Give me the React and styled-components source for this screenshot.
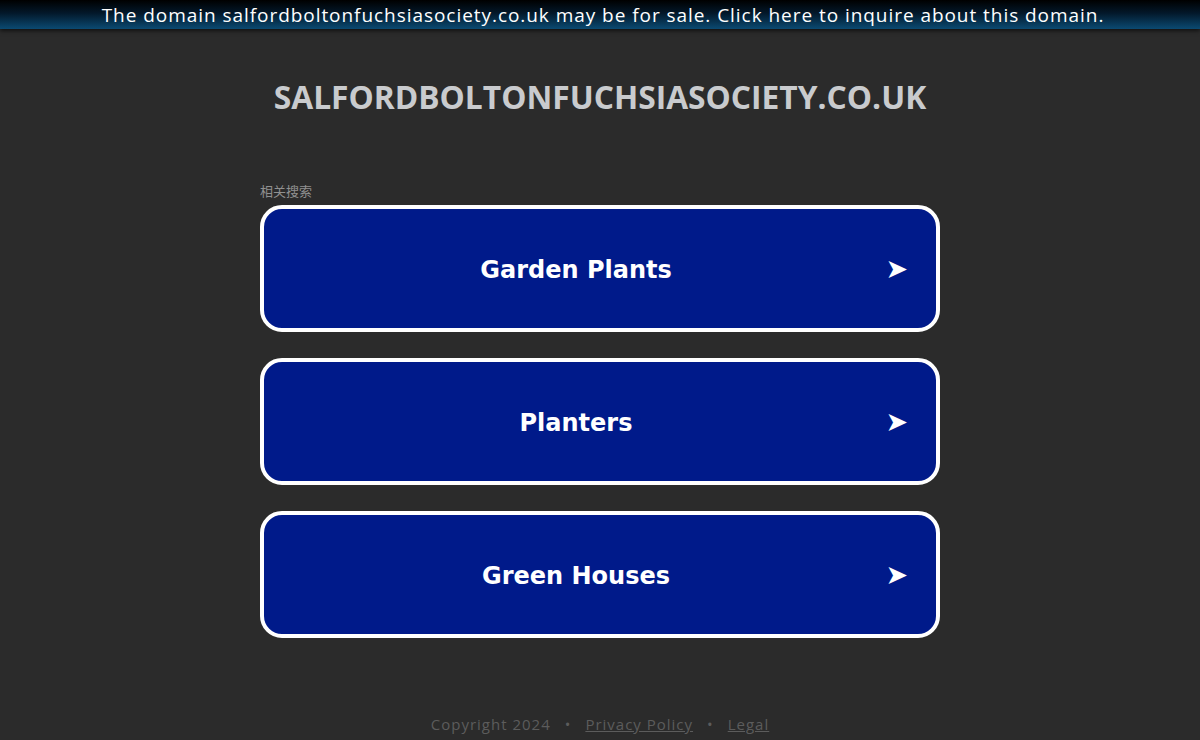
import React from 'react'
import styled, { createGlobalStyle } from 'styled-components'

const links = ['Garden Plants', 'Planters', 'Green Houses']

function App() {
  return (
    <Page>
      <GlobalStyle />
      <TopBar>
        The domain salfordboltonfuchsiasociety.co.uk may be for sale. Click here to inquire about this domain.
      </TopBar>
      <Title>SALFORDBOLTONFUCHSIASOCIETY.CO.UK</Title>
      <Main>
        <Label>相关搜索</Label>
        <List>
          {links.map((text) => (
            <LinkButton key={text} href="#">
              <span>{text}</span>
              <Arrow>➤</Arrow>
            </LinkButton>
          ))}
        </List>
      </Main>
      <Footer>
        <span>Copyright 2024</span>
        <Dot>•</Dot>
        <FooterLink href="#">Privacy Policy</FooterLink>
        <Dot>•</Dot>
        <FooterLink href="#">Legal</FooterLink>
      </Footer>
    </Page>
  )
}

export default App

const GlobalStyle = createGlobalStyle`
  html, body {
    margin: 0;
    padding: 0;
    background: #2b2b2b;
  }
`

const Page = styled.div`
  min-height: 740px;
  display: flex;
  flex-direction: column;
  align-items: center;
  background: #2b2b2b;
`

const TopBar = styled.div`
  box-sizing: border-box;
  width: 100%;
  height: 29px;
  padding-left: 6px;
  display: flex;
  align-items: center;
  justify-content: center;
  background: linear-gradient(to bottom, #000000 0%, #03182a 45%, #0b4a72 100%);
  box-shadow: 0 2px 4px rgba(0, 0, 0, 0.6);
  color: #ffffff;
  font-family: 'Open Sans', sans-serif;
  font-size: 19px;
  letter-spacing: 0.95px;
  white-space: nowrap;
`

const Title = styled.h1`
  margin: 50px 0 0;
  font-family: 'Open Sans', sans-serif;
  font-weight: 700;
  font-size: 31.75px;
  line-height: 36px;
  color: #c9cbce;
`

const Main = styled.div`
  width: 680px;
  margin-top: 68px;
`

const Label = styled.div`
  font-family: 'Noto Sans CJK SC', sans-serif;
  font-size: 13px;
  line-height: 16px;
  color: #909090;
  margin-bottom: 6px;
`

const List = styled.div`
  display: flex;
  flex-direction: column;
  gap: 26px;
`

const LinkButton = styled.a`
  box-sizing: border-box;
  height: 127px;
  display: flex;
  align-items: center;
  justify-content: center;
  position: relative;
  padding: 2px 48px 0 0;
  background: #001a8a;
  border: 4px solid #ffffff;
  border-radius: 22px;
  color: #ffffff;
  text-decoration: none;
  font-family: 'DejaVu Sans', sans-serif;
  font-weight: 700;
  font-size: 24px;
`

const Arrow = styled.span`
  position: absolute;
  right: 28px;
  top: 50%;
  transform: translateY(-52%);
  font-size: 27px;
  font-weight: 400;
`

const Footer = styled.div`
  margin-top: 76px;
  display: flex;
  align-items: center;
  gap: 14px;
  font-family: 'Open Sans', sans-serif;
  font-size: 15px;
  letter-spacing: 1px;
  color: #5c5c5c;
`

const Dot = styled.span`
  color: #5c5c5c;
`

const FooterLink = styled.a`
  color: #5c5c5c;
  text-decoration: underline;
`
